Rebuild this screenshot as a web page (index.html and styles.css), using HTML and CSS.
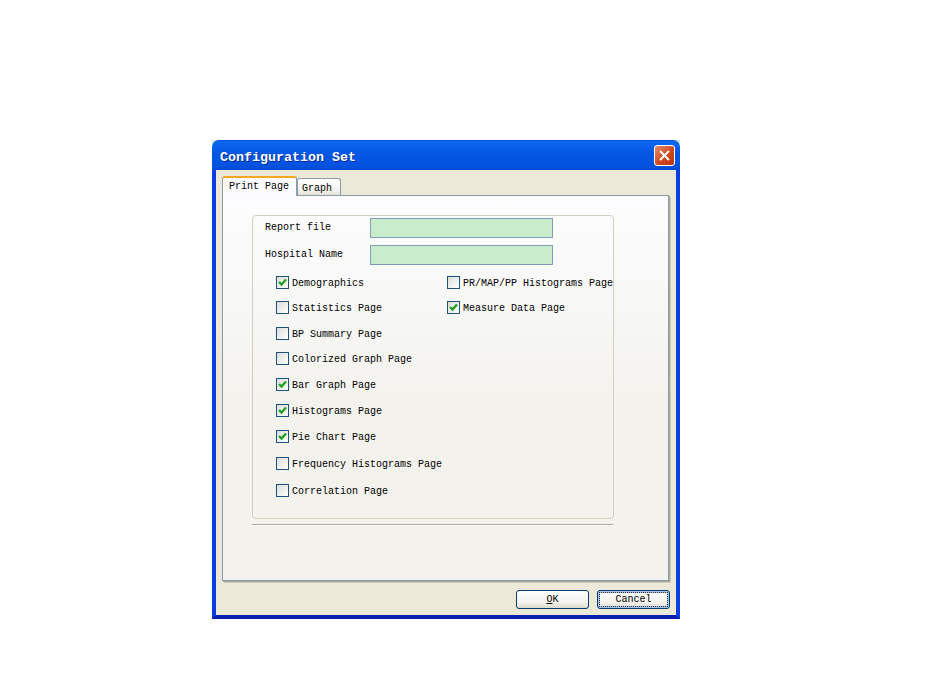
FILE: index.html
```html
<!DOCTYPE html>
<html>
<head>
	<title>Configuration Set</title>
	<link rel="stylesheet" href="styles.css">
</head>
<body>
<div class="dialog">
	<div class="titlebar">
		<span class="title">Configuration Set</span>
		<span class="close">
			<svg width="13" height="13" viewBox="0 0 13 13"><path d="M2 2 L11 11 M11 2 L2 11" stroke="#fff" stroke-width="2" fill="none"/></svg>
		</span>
	</div>
	<div class="body">
		<div class="tabs">
			<div class="tab active">Print Page</div>
			<div class="tab">Graph</div>
		</div>
		<div class="panel">
			<div class="group">
				<div class="field">
					<label>Report file</label>
					<span class="input"></span>
				</div>
				<div class="field">
					<label>Hospital Name</label>
					<span class="input"></span>
				</div>
				<div class="checks">
					<div class="check"><span class="box"><svg width="11" height="11" viewBox="0 0 11 11"><path d="M2 5 L4.5 7.5 L9 2.5" stroke="#21a121" stroke-width="2.4" fill="none"/></svg></span>Demographics</div>
					<div class="check"><span class="box"></span>Statistics Page</div>
					<div class="check"><span class="box"></span>BP Summary Page</div>
					<div class="check"><span class="box"></span>Colorized Graph Page</div>
					<div class="check"><span class="box"><svg width="11" height="11" viewBox="0 0 11 11"><path d="M2 5 L4.5 7.5 L9 2.5" stroke="#21a121" stroke-width="2.4" fill="none"/></svg></span>Bar Graph Page</div>
					<div class="check"><span class="box"><svg width="11" height="11" viewBox="0 0 11 11"><path d="M2 5 L4.5 7.5 L9 2.5" stroke="#21a121" stroke-width="2.4" fill="none"/></svg></span>Histograms Page</div>
					<div class="check"><span class="box"><svg width="11" height="11" viewBox="0 0 11 11"><path d="M2 5 L4.5 7.5 L9 2.5" stroke="#21a121" stroke-width="2.4" fill="none"/></svg></span>Pie Chart Page</div>
					<div class="check"><span class="box"></span>Frequency Histograms Page</div>
					<div class="check"><span class="box"></span>Correlation Page</div>
					<div class="check"><span class="box"></span>PR/MAP/PP Histograms Page</div>
					<div class="check"><span class="box"><svg width="11" height="11" viewBox="0 0 11 11"><path d="M2 5 L4.5 7.5 L9 2.5" stroke="#21a121" stroke-width="2.4" fill="none"/></svg></span>Measure Data Page</div>
				</div>
			</div>
			<div class="separator"></div>
		</div>
		<div class="buttons">
			<button class="btn"><u>O</u>K</button>
			<button class="btn focused">Cancel</button>
		</div>
	</div>
</div>
</body>
</html>
```

FILE: styles.css
```css
body{
	margin: 0;
	padding: 140px 0 0 212px;
	background: #fff;
}
*{
	font-family: 'Liberation Mono', monospace;
	font-size: 10px;
	color: #000;
	box-sizing: border-box;
}
.dialog{
	display: flex;
	flex-direction: column;
	width: 468px;
	height: 479px;
	background: #cfe8d0;
}
.titlebar{
	display: flex;
	align-items: center;
	justify-content: space-between;
	height: 30px;
	padding: 0 5px 0 8px;
	border-radius: 7px 7px 0 0;
	background: linear-gradient(#0850d8 0, #0a68f0 2px, #0a62ee 5px, #0458e4 12px, #0453e0 24px, #0450dc 28px, #0446c8 30px);
}
.title{
	padding-top: 4px;
	font-size: 13.33px;
	font-weight: bold;
	color: #fff;
	text-shadow: 1px 1px 0 #0a2a90;
}
.close{
	display: flex;
	align-items: center;
	justify-content: center;
	width: 21px;
	height: 21px;
	border: 1px solid #fff;
	border-radius: 3px;
	background: linear-gradient(135deg, #e88a6c, #d0481f 55%, #b8330e);
}
.body{
	flex: 1;
	display: flex;
	flex-direction: column;
	padding: 6px 6px 6px 6px;
	border: 4px solid #0a3de2;
	border-top: none;
	border-bottom-color: #0420b0;
	background: #ece9d8;
}
.tabs{
	display: flex;
	align-items: flex-end;
	height: 19px;
}
.tab{
	height: 17px;
	width: 44px;
	padding: 4px 0 0 4px;
	border: 1px solid #8a9bb0;
	border-bottom: none;
	border-radius: 3px 3px 0 0;
	background: linear-gradient(#fff, #f4f3ec 70%, #e4e2d6);
}
.tab.active{
	position: relative;
	width: 75px;
	height: 20px;
	margin-bottom: -1px;
	padding: 3px 0 0 6px;
	border-top: 2px solid #f5a623;
	border-bottom: none;
	background: #fcfcfe;
}
.panel{
	width: 447px;
	height: 386px;
	padding: 19px 0 0 29px;
	border: 1px solid #8a9bab;
	background: linear-gradient(#fdfdff, #f3f2ed 55%, #f3f2ed);
	box-shadow: 1px 1px 0 #a8a696, 2px 2px 0 #cfccbc;
}
.group{
	width: 362px;
	height: 304px;
	padding: 2px 0 0 12px;
	border: 1px solid #d0d0bf;
	border-radius: 4px;
}
.field{
	display: flex;
	align-items: center;
	margin-bottom: 7px;
}
.field label{
	width: 105px;
	padding-bottom: 2px;
}
.input{
	width: 183px;
	height: 20px;
	border: 1px solid #7f9db9;
	background: #c8ecca;
}
.checks{
	display: grid;
	grid-auto-flow: column;
	grid-template-columns: 171px auto;
	grid-template-rows: 25px 26px 25px 26px 26px 26px 27px 27px 13px;
	margin: 11px 0 0 11px;
}
.check{
	display: flex;
	gap: 3px;
	height: 15px;
	line-height: 15px;
	white-space: nowrap;
}
.box{
	display: block;
	flex: none;
	width: 13px;
	height: 13px;
	border: 1px solid #1c5180;
	background: linear-gradient(135deg, #dcdcd7, #fff);
}
.box svg{
	display: block;
}
.separator{
	width: 361px;
	height: 2px;
	margin-top: 5px;
	border-top: 1px solid #aca899;
	background: #fff;
}
.buttons{
	display: flex;
	justify-content: flex-end;
	gap: 8px;
	margin-top: 9px;
}
.btn{
	width: 73px;
	height: 19px;
	padding: 0;
	border: 1px solid #003c74;
	border-radius: 3px;
	background: linear-gradient(#fff, #f2f1ea 70%, #dcd8cc);
}
.btn.focused{
	outline: 1px dotted #333;
	outline-offset: -3px;
	box-shadow: inset 0 0 0 2px #a8c4ec;
}
```
